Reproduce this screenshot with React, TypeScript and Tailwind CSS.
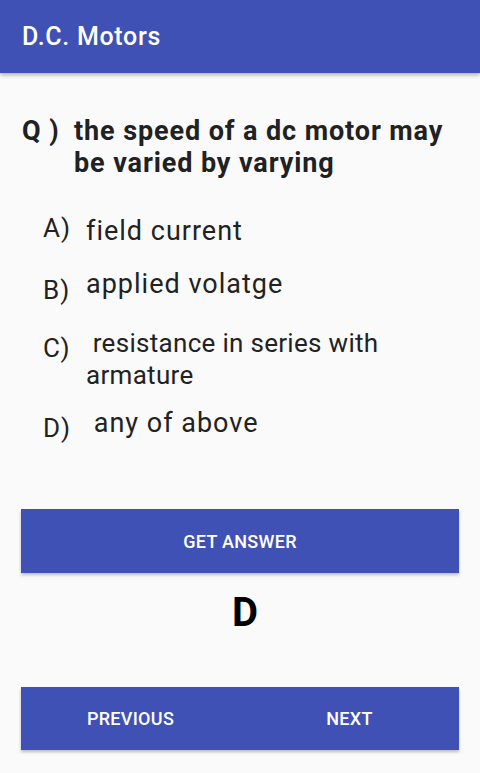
export default function App() {
  const options = [
    { key: "A)", text: "field current", row: "mt-[33px]", keyCls: "pt-0", textCls: "pt-[3px] text-[27px] tracking-[1px]" },
    { key: "B)", text: "applied volatge", row: "mt-[21px]", keyCls: "pt-[6px]", textCls: "pt-0 text-[27px] tracking-[1px]" },
    { key: "C)", text: "\u00a0resistance in series with armature", row: "mt-[21px]", keyCls: "pt-[5px]", textCls: "pt-0 text-[26px] tracking-[0.3px]" },
    { key: "D)", text: "\u00a0any of above", row: "mt-[16px]", keyCls: "pt-[5px]", textCls: "pt-0 text-[27px] tracking-[1px]" },
  ];

  return (
    <div className="min-h-[773px] w-[480px] bg-[#fafafa] font-['Roboto',sans-serif]">
      <div className="flex h-[73px] items-center bg-[#3f51b5] pl-[22px] shadow-[0_2px_4px_rgba(0,0,0,0.3)]">
        <h1 className="text-[25px] font-medium tracking-[0.7px] text-white">D.C. Motors</h1>
      </div>

      <div className="flex pl-[22px] pr-[18px] pt-[42px]">
        <span className="w-[52px] shrink-0 text-[27px] font-bold leading-[32px] tracking-[0.9px] text-[#212121]">Q )</span>
        <p className="text-[27px] font-bold leading-[32px] tracking-[0.9px] text-[#212121]">
          the speed of a dc motor may be varied by varying
        </p>
      </div>

      <div className="flex flex-col pl-[43px] pr-[90px]">
        {options.map((o) => (
          <div key={o.key} className={`flex ${o.row}`}>
            <span className={`w-[43px] shrink-0 text-[26px] leading-[32px] tracking-[1px] text-[#222] ${o.keyCls}`}>{o.key}</span>
            <span className={`leading-[32px] text-[#222] ${o.textCls}`}>{o.text}</span>
          </div>
        ))}
      </div>

      <div className="px-[21px] pt-[65px]">
        <button className="flex h-[64px] w-full items-center justify-center bg-[#3f51b5] text-[18px] font-medium tracking-[0.3px] text-white shadow-[0_2px_3px_rgba(0,0,0,0.25)]">
          GET ANSWER
        </button>
      </div>

      <div className="flex justify-center pl-[10px] pt-[16px]">
        <span className="text-[40px] font-bold leading-[48px] text-black">D</span>
      </div>

      <div className="px-[21px] pt-[50px]">
        <div className="flex h-[63px] bg-[#3f51b5] shadow-[0_2px_3px_rgba(0,0,0,0.25)]">
          <button className="flex-1 text-[18px] font-medium tracking-[0.3px] text-white">PREVIOUS</button>
          <button className="flex-1 text-[18px] font-medium tracking-[0.3px] text-white">NEXT</button>
        </div>
      </div>
    </div>
  );
}
